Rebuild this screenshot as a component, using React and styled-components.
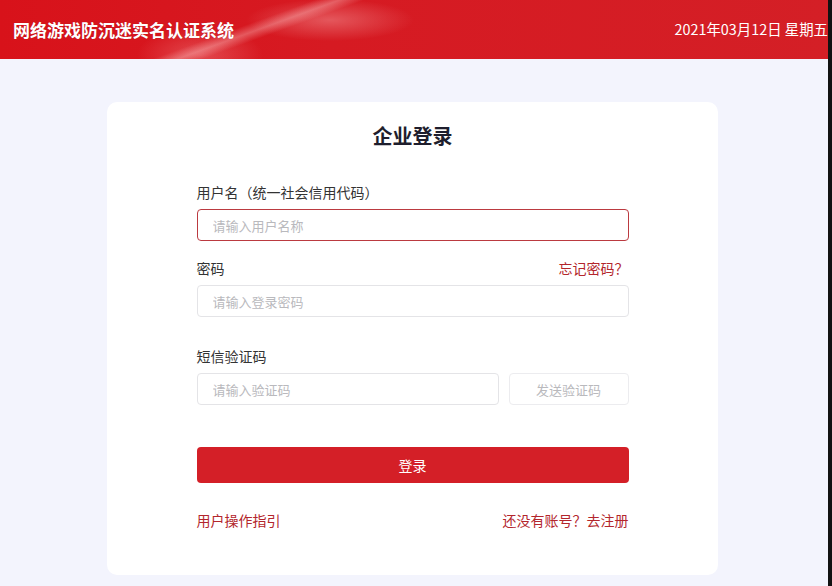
import React from 'react';
import styled, { createGlobalStyle } from 'styled-components';

const GlobalStyle = createGlobalStyle`
  html, body {
    margin: 0;
    padding: 0;
    background: #f3f4fd;
    font-family: "Microsoft YaHei", "Noto Sans CJK SC", "Noto Sans", sans-serif;
  }
  * { box-sizing: border-box; }
`;

const Frame = styled.div`
  display: flex;
  width: 832px;
  height: 586px;
  overflow: hidden;
`;

const Page = styled.div`
  flex: 1;
  display: flex;
  flex-direction: column;
  background: #f3f4fd;
`;

const EdgeStrip = styled.div`
  width: 4px;
  background: #121212;
`;

const Header = styled.header`
  height: 59px;
  display: flex;
  align-items: center;
  justify-content: space-between;
  padding: 0 0 0 13px;
  color: #fff;
  background:
    linear-gradient(160deg, rgba(255,255,255,0) 0%, rgba(255,255,255,0) 46%, rgba(255,210,210,0.35) 52%, rgba(255,255,255,0) 58%) 120px 0 / 260px 59px no-repeat,
    radial-gradient(ellipse 120px 30px at 330px 20px, rgba(255,200,200,0.35), rgba(255,255,255,0) 70%),
    radial-gradient(ellipse 90px 40px at 200px 55px, rgba(255,190,190,0.3), rgba(255,255,255,0) 70%),
    linear-gradient(90deg, #d8121a 0%, #d61a22 40%, #d41f26 100%);
`;

const SiteTitle = styled.h1`
  margin: 0;
  font-size: 17px;
  font-weight: 700;
  letter-spacing: 0;
  text-shadow: 0 0 1px rgba(0,0,0,0.2);
`;

const DateText = styled.span`
  font-size: 14.4px;
  margin-top: -2px;
`;

const Main = styled.main`
  flex: 1;
  display: flex;
  justify-content: center;
  padding: 43px 3px 0 0;
`;

const Card = styled.section`
  width: 611px;
  height: 473px;
  background: #fff;
  border-radius: 10px;
  display: flex;
  flex-direction: column;
  align-items: center;
  padding-top: 20px;
`;

const CardTitle = styled.h2`
  margin: 0;
  font-size: 20px;
  line-height: 28px;
  font-weight: 700;
  color: #1e1e2d;
`;

const Form = styled.form`
  width: 432px;
  display: flex;
  flex-direction: column;
  margin-top: 32px;
`;

const LabelRow = styled.div`
  display: flex;
  justify-content: space-between;
  align-items: center;
  height: 20px;
  margin-top: ${({ gap }) => gap || 0}px;
  margin-bottom: 7px;
`;

const Label = styled.label`
  font-size: 14px;
  color: #333;
`;

const LinkText = styled.a`
  font-size: 14px;
  color: #b3262c;
  text-decoration: none;
  cursor: pointer;
`;

const FieldRow = styled.div`
  display: flex;
  gap: 10px;
`;

const Input = styled.input`
  flex: 1;
  min-width: 0;
  height: 32px;
  border: 1px solid ${({ active }) => (active ? '#bb3a40' : '#e4e4e7')};
  border-radius: 4px;
  padding: 0 15px;
  font-size: 13px;
  font-family: inherit;
  color: #333;
  outline: none;
  &::placeholder { color: #b9b9bd; }
`;

const CodeButton = styled.button`
  width: 120px;
  height: 32px;
  border: 1px solid #ececef;
  border-radius: 4px;
  background: #fff;
  color: #b9b9bd;
  font-size: 13px;
  font-family: inherit;
`;

const SubmitButton = styled.button`
  margin-top: 42px;
  height: 36px;
  border: none;
  border-radius: 4px;
  background: #d41f27;
  color: #fff;
  font-size: 14px;
  font-family: inherit;
`;

const Footer = styled.div`
  display: flex;
  justify-content: space-between;
  margin-top: 27px;
  line-height: 20px;
`;

export default function App() {
  return (
    <>
      <GlobalStyle />
      <Frame>
        <Page>
          <Header>
            <SiteTitle>网络游戏防沉迷实名认证系统</SiteTitle>
            <DateText>2021年03月12日 星期五</DateText>
          </Header>
          <Main>
            <Card>
              <CardTitle>企业登录</CardTitle>
              <Form onSubmit={(e) => e.preventDefault()}>
                <LabelRow>
                  <Label>用户名（统一社会信用代码）</Label>
                </LabelRow>
                <FieldRow>
                  <Input active placeholder="请输入用户名称" />
                </FieldRow>

                <LabelRow gap={17}>
                  <Label>密码</Label>
                  <LinkText>忘记密码？</LinkText>
                </LabelRow>
                <FieldRow>
                  <Input type="password" placeholder="请输入登录密码" />
                </FieldRow>

                <LabelRow gap={29}>
                  <Label>短信验证码</Label>
                </LabelRow>
                <FieldRow>
                  <Input placeholder="请输入验证码" />
                  <CodeButton type="button">发送验证码</CodeButton>
                </FieldRow>

                <SubmitButton type="submit">登录</SubmitButton>

                <Footer>
                  <LinkText>用户操作指引</LinkText>
                  <LinkText>还没有账号？去注册</LinkText>
                </Footer>
              </Form>
            </Card>
          </Main>
        </Page>
        <EdgeStrip />
      </Frame>
    </>
  );
}
